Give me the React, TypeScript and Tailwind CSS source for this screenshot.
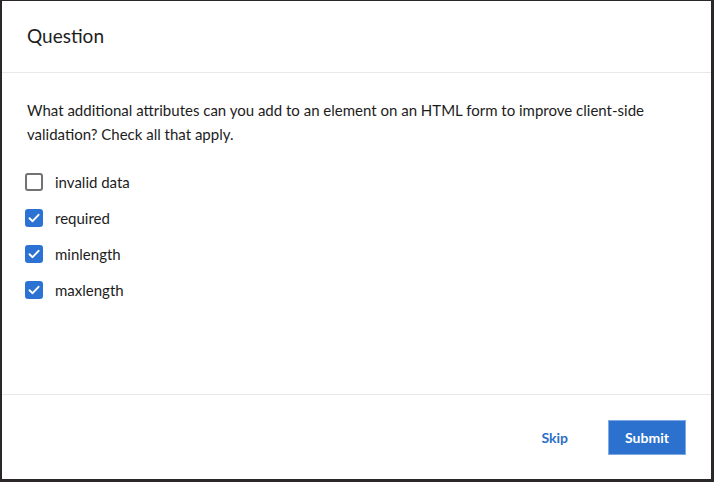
import React from "react";

const Check = ({ checked }: { checked: boolean }) =>
  checked ? (
    <span className="flex h-[18px] w-[18px] items-center justify-center rounded-[3px] bg-[#2b72d3]">
      <svg width="14" height="14" viewBox="0 0 14 14" fill="none">
        <path d="M2.5 7.2 L5.6 10.2 L11.6 3.8" stroke="white" strokeWidth="1.9" strokeLinecap="round" strokeLinejoin="round" />
      </svg>
    </span>
  ) : (
    <span className="h-[18px] w-[18px] rounded-[3px] border-2 border-[#727272] bg-white" />
  );

const items = [
  { label: "invalid data", checked: false },
  { label: "required", checked: true },
  { label: "minlength", checked: true },
  { label: "maxlength", checked: true },
];

export default function App() {
  return (
    <div
      className="h-[482px] w-[714px] bg-[#2a2726] pb-[3px] pl-[2px] pr-[3px] pt-[1px]"
      style={{ fontFamily: "Lato, 'Open Sans', sans-serif" }}
    >
      <div className="flex h-full w-full flex-col bg-white">
        <div className="flex h-[72px] items-center border-b border-[#e8e8e8] pb-[3px] pl-[25px]">
          <h1 className="text-[19px] leading-none text-[#1d1d1d]">Question</h1>
        </div>
        <div className="flex-1 px-[25px] pt-[25px]">
          <p className="text-[15px] leading-[24px] text-[#1d1d1d]">
            What additional attributes can you add to an element on an HTML form to improve client-side validation? Check all that apply.
          </p>
          <div className="mt-[18px] flex flex-col">
            {items.map((it) => (
              <label key={it.label} className="ml-[-2px] flex h-[36px] items-center gap-[12px]">
                <Check checked={it.checked} />
                <span className="text-[15px] text-[#1d1d1d]">{it.label}</span>
              </label>
            ))}
          </div>
        </div>
        <div className="flex h-[85px] items-center justify-end gap-[40px] border-t border-[#e8e8e8] pr-[25px]">
          <button className="text-[14px] font-bold text-[#2b6fc9]">Skip</button>
          <button className="h-[35px] w-[78px] border border-[#7ea9e4] bg-[#2b71cd] text-[14px] font-bold text-white">
            Submit
          </button>
        </div>
      </div>
    </div>
  );
}
